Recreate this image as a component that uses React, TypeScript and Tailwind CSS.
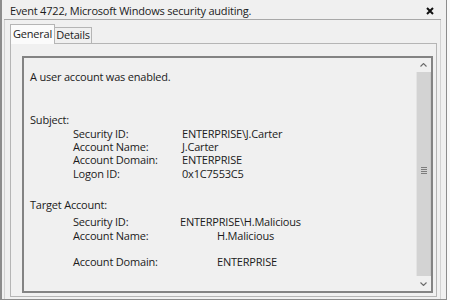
const FONT = { fontFamily: '"Open Sans", "Noto Sans", sans-serif' };

type Row = { label: string; value: string; valuePad?: boolean; mt?: string };

const SUBJECT: Row[] = [
  { label: "Security ID:", value: "ENTERPRISE\\J.Carter" },
  { label: "Account Name:", value: "J.Carter" },
  { label: "Account Domain:", value: "ENTERPRISE" },
  { label: "Logon ID:", value: "0x1C7553C5" },
];

const TARGET: Row[] = [
  { label: "Security ID:", value: "ENTERPRISE\\H.Malicious", mt: "mt-[4px]" },
  { label: "Account Name:", value: "H.Malicious", valuePad: true },
  { label: "Account Domain:", value: "ENTERPRISE", valuePad: true, mt: "mt-[13px]" },
];

function Field({ r, shift }: { r: Row; shift?: boolean }) {
  return (
    <div className={`flex pl-[43px] ${r.mt ?? ""}`}>
      <span className={shift ? "w-[107px]" : "w-[109px]"}>{r.label}</span>
      <span className={r.valuePad ? "pl-[35px]" : ""}>{r.value}</span>
    </div>
  );
}

function Chevron({ down = false }: { down?: boolean }) {
  return (
    <svg width="7" height="4" viewBox="0 0 7 4" className="block">
      <path
        d={down ? "M0.5 0.5 L3.5 3.5 L6.5 0.5" : "M0.5 3.5 L3.5 0.5 L6.5 3.5"}
        fill="none"
        stroke="#6b6b6b"
        strokeWidth="1.1"
      />
    </svg>
  );
}

function ScrollBar() {
  return (
    <div className="w-[15px] flex flex-col bg-[#e9e9e9]">
      <div className="h-[14px] flex items-center justify-center bg-[#f0f0f0]">
        <Chevron />
      </div>
      <div className="flex-1 flex items-center justify-center bg-[#d3d3d3] border-l border-[#e4e4e4] border-r border-r-[#c9c9c9]">
        <div className="flex flex-col gap-[1px] -mt-[7px]">
          <div className="w-[6px] h-[1px] bg-[#7c7c7c]" />
          <div className="w-[6px] h-[1px] bg-[#7c7c7c]" />
          <div className="w-[6px] h-[1px] bg-[#7c7c7c]" />
          <div className="w-[6px] h-[1px] bg-[#7c7c7c]" />
        </div>
      </div>
      <div className="h-[15px] flex items-center justify-center bg-[#f0f0f0]">
        <Chevron down />
      </div>
    </div>
  );
}

export default function App() {
  return (
    <div className="w-[450px] h-[300px] flex bg-[#fafafa] text-[#1b1b1b]" style={FONT}>
      <div className="w-[447px] h-[300px] flex flex-col bg-[#f0f0f0] border-l-2 border-r border-b border-[#8c8c8c]">
        {/* title bar */}
        <div className="h-[20px] ml-[2px] mr-[5px] flex items-center justify-between border-b border-[#a8a8a8] pl-[6px] pr-[7px] pt-[2px]">
          <span className="text-[11px] tracking-[-0.2px] leading-none">
            Event 4722, Microsoft Windows security auditing.
          </span>
          <svg width="8" height="8" viewBox="0 0 8 8" className="block">
            <path d="M1 1 L7 7 M7 1 L1 7" stroke="#111" strokeWidth="2" />
          </svg>
        </div>

        {/* dialog body */}
        <div className="flex-1 flex flex-col ml-[2px] mr-[5px] pl-[5px] pr-[3px] pb-[2px] border-l border-r border-[#d2d2d2]">
          {/* tabs */}
          <div className="h-[23px] flex items-end text-[11px] tracking-[-0.2px]">
            <div className="relative z-10 w-[45px] h-[20px] -mb-px bg-[#fbfbfb] border border-b-0 border-[#b5b5b5] flex items-center justify-center pb-[1px]">
              General
            </div>
            <div className="w-[37px] h-[16px] bg-[#f0f0f0] border-t border-r border-[#b5b5b5] flex items-center justify-center">
              Details
            </div>
          </div>

          {/* tab panel */}
          <div className="flex-1 flex flex-col border border-[#b5b5b5] bg-[#f0f0f0] pt-[12px] pl-[11px] pr-[3px] pb-[3px]">
            <div className="flex-1 flex border-2 border-[#838383] bg-[#f0f0f0]">
              <div className="flex-1 pl-[6px] pt-[12px] text-[11px] tracking-[-0.2px] leading-[13.33px]">
                <div>A user account was enabled.</div>

                <div className="mt-[30px]">Subject:</div>
                {SUBJECT.map((r) => (
                  <Field key={r.label} r={r} />
                ))}

                <div className="mt-[18px]">Target Account:</div>
                {TARGET.map((r, i) => (
                  <Field key={r.label} r={r} shift={i === 0} />
                ))}
              </div>
              <ScrollBar />
            </div>
          </div>
        </div>
      </div>
    </div>
  );
}
